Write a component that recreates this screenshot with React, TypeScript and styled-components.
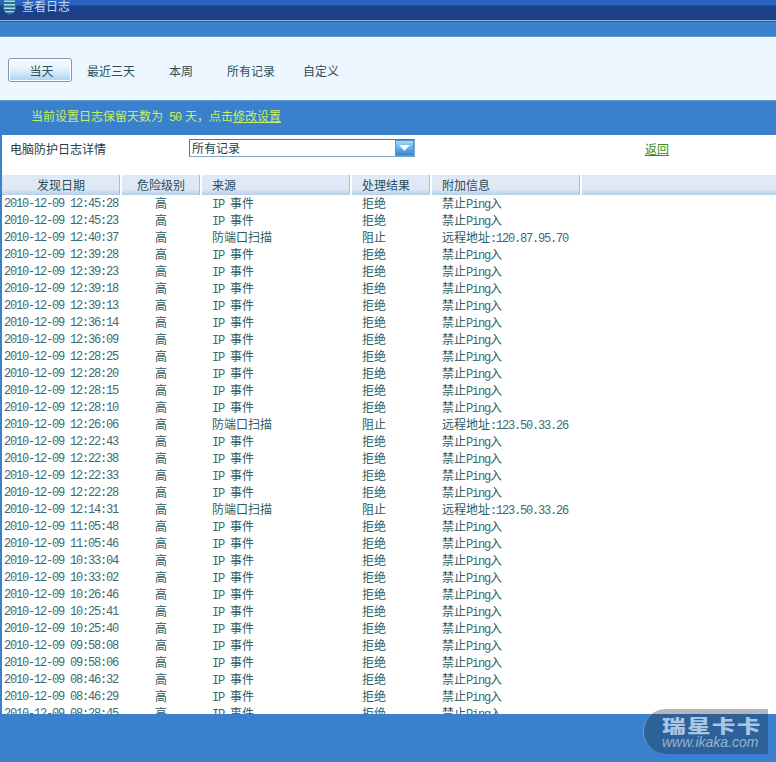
import React from "react";
import styled, { createGlobalStyle } from "styled-components";

const CJK = `"Noto Sans CJK SC", "Liberation Sans", sans-serif`;

const Global = createGlobalStyle`
  html, body { margin: 0; padding: 0; background: #3a80cc; }
  body { width: 776px; height: 762px; overflow: hidden; font-family: ${CJK}; font-size: 12px; }
  * { box-sizing: border-box; }
`;

const Page = styled.div`
  position: relative;
  width: 776px;
  height: 762px;
  display: flex;
  flex-direction: column;
  background: #3a80cc;
  overflow: hidden;
`;

const TitleBar = styled.div`
  height: 22px;
  flex: none;
  display: flex;
  align-items: flex-start;
  gap: 6px;
  padding-left: 3px;
  color: #c4d6ee;
  font-size: 12px;
  background: linear-gradient(
    to bottom,
    #2a62c0 0,
    #2a62c0 5px,
    #1a4088 6px,
    #1a4088 20px,
    #8fb4e4 20px,
    #8fb4e4 21px,
    #2a5aa8 21px
  );
`;

const TitleText = styled.span`
  line-height: 11px;
  height: 11px;
  white-space: nowrap;
`;

const Spacer = styled.div`
  height: 14px;
  flex: none;
`;

const Toolbar = styled.div`
  height: 65px;
  flex: none;
  display: flex;
  align-items: center;
  padding: 3px 0 0 8px;
  background: #eef7ff;
  border-top: 1px solid #5f9fd8;
  border-bottom: 1px solid #5f9fd8;
`;

const ActiveTab = styled.div`
  width: 64px;
  height: 24px;
  margin-right: 4px;
  padding-left: 3px;
  display: flex;
  align-items: center;
  justify-content: center;
  color: #2c4f58;
  border: 1px solid #7d9cb4;
  border-radius: 3px;
  background: linear-gradient(to bottom, #f6fbff 0, #e6f2fb 45%, #a9d3ef 100%);
  box-shadow: inset 0 0 0 1px #ffffff;
`;

const Tab = styled.div`
  width: 70px;
  text-align: center;
  color: #2c4f58;
`;

const Notice = styled.div`
  height: 34px;
  flex: none;
  line-height: 30px;
  padding-left: 31px;
  color: #c4f066;
  white-space: nowrap;
`;

const NoticeNumber = styled.span`
  font-family: "Liberation Mono", monospace;
  font-size: 12px;
  letter-spacing: -1.2px;
  white-space: pre;
  margin-right: -2px;
`;

const NoticeLink = styled.span`
  text-decoration: underline;
`;

const Panel = styled.div`
  height: 579px;
  flex: none;
  margin-left: 2px;
  background: #ffffff;
  display: flex;
  flex-direction: column;
  overflow: hidden;
`;

const FilterRow = styled.div`
  height: 40px;
  flex: none;
  display: flex;
  align-items: flex-start;
  padding-top: 4px;
`;

const FilterLabel = styled.div`
  width: 187px;
  padding: 1px 0 0 8px;
  line-height: 18px;
  color: #2a3a3e;
  flex: none;
`;

const SelectBox = styled.div`
  width: 226px;
  height: 18px;
  flex: none;
  display: flex;
  justify-content: space-between;
  border: 1px solid #7fa8c8;
  border-left-color: #4c7c9c;
  border-top-color: #4c7c9c;
  line-height: 15px;
  padding-left: 2px;
  color: #24404a;
`;

const SelectArrow = styled.div`
  width: 19px;
  height: 16px;
  display: flex;
  align-items: center;
  justify-content: center;
  background: linear-gradient(to bottom, #a8d8f6 0, #63b0ea 50%, #3d88cc 100%);
  border: 1px solid #5a94c8;
`;

const BackLink = styled.a`
  margin-left: 230px;
  padding-top: 1px;
  line-height: 18px;
  color: #3a8a20;
  text-decoration: underline;
`;

const HeaderRow = styled.div`
  height: 20px;
  flex: none;
  display: grid;
  grid-template-columns: 120px 80px 150px 80px 150px 1fr;
  color: #2c4a58;
`;

const HeaderCell = styled.div<{ $center?: boolean }>`
  padding-left: ${(p) => (p.$center ? "0" : "10px")};
  text-align: ${(p) => (p.$center ? "center" : "left")};
  line-height: 19px;
  background: linear-gradient(to bottom, #e0eaf6 0, #dfe9f5 70%, #b4cfe8 100%);
  border-right: 2px solid #ffffff;
  box-shadow: inset -1px 0 0 #a8bfd6;
  &:last-child {
    border-right: 0;
    box-shadow: none;
  }
`;

const Row = styled.div`
  height: 17px;
  flex: none;
  display: grid;
  grid-template-columns: 120px 80px 150px 80px 150px 1fr;
  align-items: start;
  color: #2e5a60;
  white-space: nowrap;
`;

const DateCell = styled.div`
  height: 17px;
  line-height: 18px;
  padding-left: 2px;
  color: #3d6a70;
  font-family: "Liberation Mono", monospace;
  font-size: 12px;
  letter-spacing: -1.2px;
`;

const LevelCell = styled.div`
  height: 16px;
  line-height: 16px;
  text-align: center;
  padding-right: 2px;
`;

const TextCell = styled.div`
  height: 16px;
  line-height: 16px;
  padding-left: 10px;
`;

const Latin = styled.span`
  font-family: "Liberation Mono", monospace;
  font-size: 12px;
  letter-spacing: -1.2px;
  white-space: pre;
  line-height: 1;
  color: #3d6a70;
`;

const Watermark = styled.div`
  position: absolute;
  left: 643px;
  top: 709px;
  width: 125px;
  height: 45px;
  padding: 7px 0 0 18px;
  border-radius: 24px 0 0 24px;
  background: rgba(20, 30, 50, 0.32);
  border-left: 1px solid rgba(190, 215, 240, 0.5);
  overflow: hidden;
`;

const WatermarkName = styled.div`
  font-size: 18px;
  font-weight: 900;
  line-height: 18px;
  letter-spacing: 1px;
  white-space: nowrap;
  color: #a9c5e2;
  transform: scaleX(1.31);
  transform-origin: left center;
`;

const WatermarkUrl = styled.div`
  font-family: "Liberation Sans", sans-serif;
  font-style: italic;
  font-size: 14px;
  line-height: 15px;
  margin-top: 1px;
  white-space: nowrap;
  color: #93b3d4;
`;

const port = (time: string, ip: string) => ({ time, ip });

const entries: { time: string; ip?: string }[] = [
  { time: "12:45:28" },
  { time: "12:45:23" },
  port("12:40:37", "120.87.95.70"),
  { time: "12:39:28" },
  { time: "12:39:23" },
  { time: "12:39:18" },
  { time: "12:39:13" },
  { time: "12:36:14" },
  { time: "12:36:09" },
  { time: "12:28:25" },
  { time: "12:28:20" },
  { time: "12:28:15" },
  { time: "12:28:10" },
  port("12:26:06", "123.50.33.26"),
  { time: "12:22:43" },
  { time: "12:22:38" },
  { time: "12:22:33" },
  { time: "12:22:28" },
  port("12:14:31", "123.50.33.26"),
  { time: "11:05:48" },
  { time: "11:05:46" },
  { time: "10:33:04" },
  { time: "10:33:02" },
  { time: "10:26:46" },
  { time: "10:25:41" },
  { time: "10:25:40" },
  { time: "09:58:08" },
  { time: "09:58:06" },
  { time: "08:46:32" },
  { time: "08:46:29" },
  { time: "08:28:45" },
];

const ShieldIcon = () => (
  <svg width="13" height="15" viewBox="0 0 13 15" aria-hidden="true">
    <path d="M0 0h13v8.500C13 11.500 10 13.500 6.500 15 3 13.500 0 11.500 0 8.500z" fill="#2a7096" />
    <path d="M1 .5h11V2H1zM1 4h11v1.500H1zM1 7.500h11V9H1zM2 11h9v1.300H2z" fill="#a8dce6" />
  </svg>
);

const ArrowIcon = () => (
  <svg width="11" height="6" viewBox="0 0 11 6" aria-hidden="true">
    <path d="M0 0h11L5.500 6z" fill="#f4fbff" />
  </svg>
);

export default function App() {
  return (
    <Page>
      <Global />
      <TitleBar>
        <ShieldIcon />
        <TitleText>查看日志</TitleText>
      </TitleBar>
      <Spacer />
      <Toolbar>
        <ActiveTab>当天</ActiveTab>
        <Tab>最近三天</Tab>
        <Tab>本周</Tab>
        <Tab>所有记录</Tab>
        <Tab>自定义</Tab>
      </Toolbar>
      <Notice>
        当前设置日志保留天数为<NoticeNumber> 50 </NoticeNumber>天，点击
        <NoticeLink>修改设置</NoticeLink>
      </Notice>
      <Panel>
        <FilterRow>
          <FilterLabel>电脑防护日志详情</FilterLabel>
          <SelectBox>
            所有记录
            <SelectArrow>
              <ArrowIcon />
            </SelectArrow>
          </SelectBox>
          <BackLink>返回</BackLink>
        </FilterRow>
        <HeaderRow>
          <HeaderCell $center>发现日期</HeaderCell>
          <HeaderCell $center>危险级别</HeaderCell>
          <HeaderCell>来源</HeaderCell>
          <HeaderCell>处理结果</HeaderCell>
          <HeaderCell>附加信息</HeaderCell>
          <HeaderCell />
        </HeaderRow>
        {entries.map((e) => (
          <Row key={e.time}>
            <DateCell>2010-12-09 {e.time}</DateCell>
            <LevelCell>高</LevelCell>
            <TextCell>
              {e.ip ? (
                "防端口扫描"
              ) : (
                <>
                  <Latin>IP </Latin>事件
                </>
              )}
            </TextCell>
            <TextCell>{e.ip ? "阻止" : "拒绝"}</TextCell>
            <TextCell>
              {e.ip ? (
                <>
                  远程地址<Latin>:{e.ip}</Latin>
                </>
              ) : (
                <>
                  禁止<Latin>Ping</Latin>入
                </>
              )}
            </TextCell>
          </Row>
        ))}
      </Panel>
      <Watermark>
        <WatermarkName>瑞星卡卡</WatermarkName>
        <WatermarkUrl>www.ikaka.com</WatermarkUrl>
      </Watermark>
    </Page>
  );
}
